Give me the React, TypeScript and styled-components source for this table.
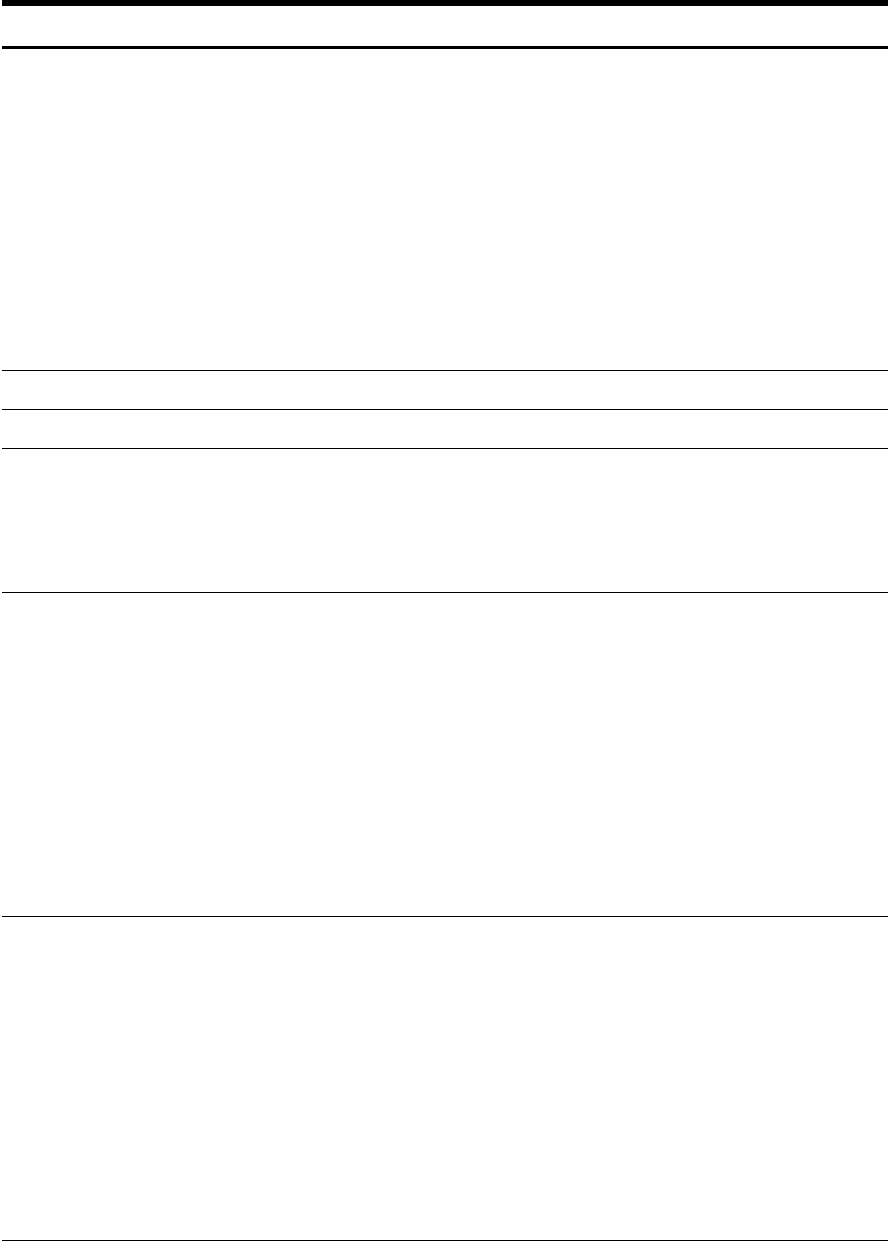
import React from "react";
import styled, { createGlobalStyle } from "styled-components";

const GlobalStyle = createGlobalStyle`
  html, body {
    margin: 0;
    padding: 0;
    background: #ffffff;
    font-family: "Liberation Sans", Arial, sans-serif;
  }
`;

const Page = styled.div`
  padding-left: 2px;
  display: flex;
  flex-direction: column;
`;

const TopBar = styled.header`
  height: 6px;
  background: #000000;
`;

const Heading = styled.div`
  height: 40px;
  border-bottom: 3px solid #000000;
`;

const Section = styled.section<{ $height: number }>`
  height: ${(p) => p.$height}px;
  border-bottom: 1px solid #000000;
`;

const sections = [321, 38, 38, 143, 323, 323];

export default function App() {
  return (
    <>
      <GlobalStyle />
      <Page>
        <TopBar />
        <Heading />
        {sections.map((h, i) => (
          <Section key={i} $height={h} />
        ))}
      </Page>
    </>
  );
}
